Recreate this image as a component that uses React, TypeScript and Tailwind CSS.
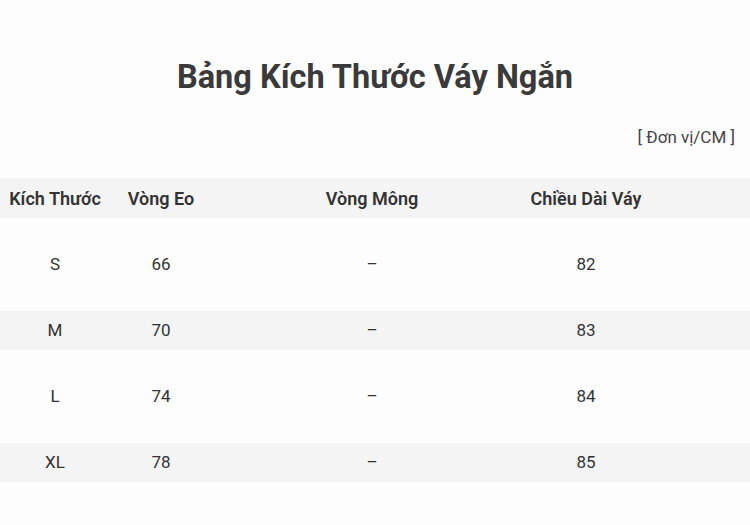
const rows = [
  { size: 'S', eo: '66', mong: '–', dai: '82', tall: true },
  { size: 'M', eo: '70', mong: '–', dai: '83', tall: false },
  { size: 'L', eo: '74', mong: '–', dai: '84', tall: true },
  { size: 'XL', eo: '78', mong: '–', dai: '85', tall: false },
]

const cols = 'grid grid-cols-[110px_102px_320px_108px_1fr] items-center'

function Cell({ children }: { children?: React.ReactNode }) {
  return <div className="flex justify-center whitespace-nowrap">{children}</div>
}

export default function App() {
  return (
    <div className="h-[525px] w-[750px] overflow-hidden bg-[#fdfdfd] font-['Roboto',sans-serif] text-[#333]">
      <h1 className="pt-[56px] text-center text-[32.5px] font-bold leading-[42px] text-[#3a3a3a]">
        Bảng Kích Thước Váy Ngắn
      </h1>
      <p className="mt-[27px] pr-[15px] text-right text-[17px] leading-[24px] text-[#444]">[ Đơn vị/CM ]</p>

      <div className="mt-[29px]">
        <div className={`${cols} h-[40px] bg-[#f4f4f4] text-[18px] font-semibold text-[#333]`}>
          <Cell>Kích Thước</Cell>
          <Cell>Vòng Eo</Cell>
          <Cell>Vòng Mông</Cell>
          <Cell>Chiều Dài Váy</Cell>
          <Cell />
        </div>
        {rows.map((r) => (
          <div
            key={r.size}
            className={`${cols} text-[17px] text-[#333] ${r.tall ? 'h-[93px] bg-[#fdfdfd]' : 'h-[39px] bg-[#f4f4f4]'}`}
          >
            <Cell>{r.size}</Cell>
            <Cell>{r.eo}</Cell>
            <Cell>{r.mong}</Cell>
            <Cell>{r.dai}</Cell>
            <Cell />
          </div>
        ))}
      </div>
    </div>
  )
}
